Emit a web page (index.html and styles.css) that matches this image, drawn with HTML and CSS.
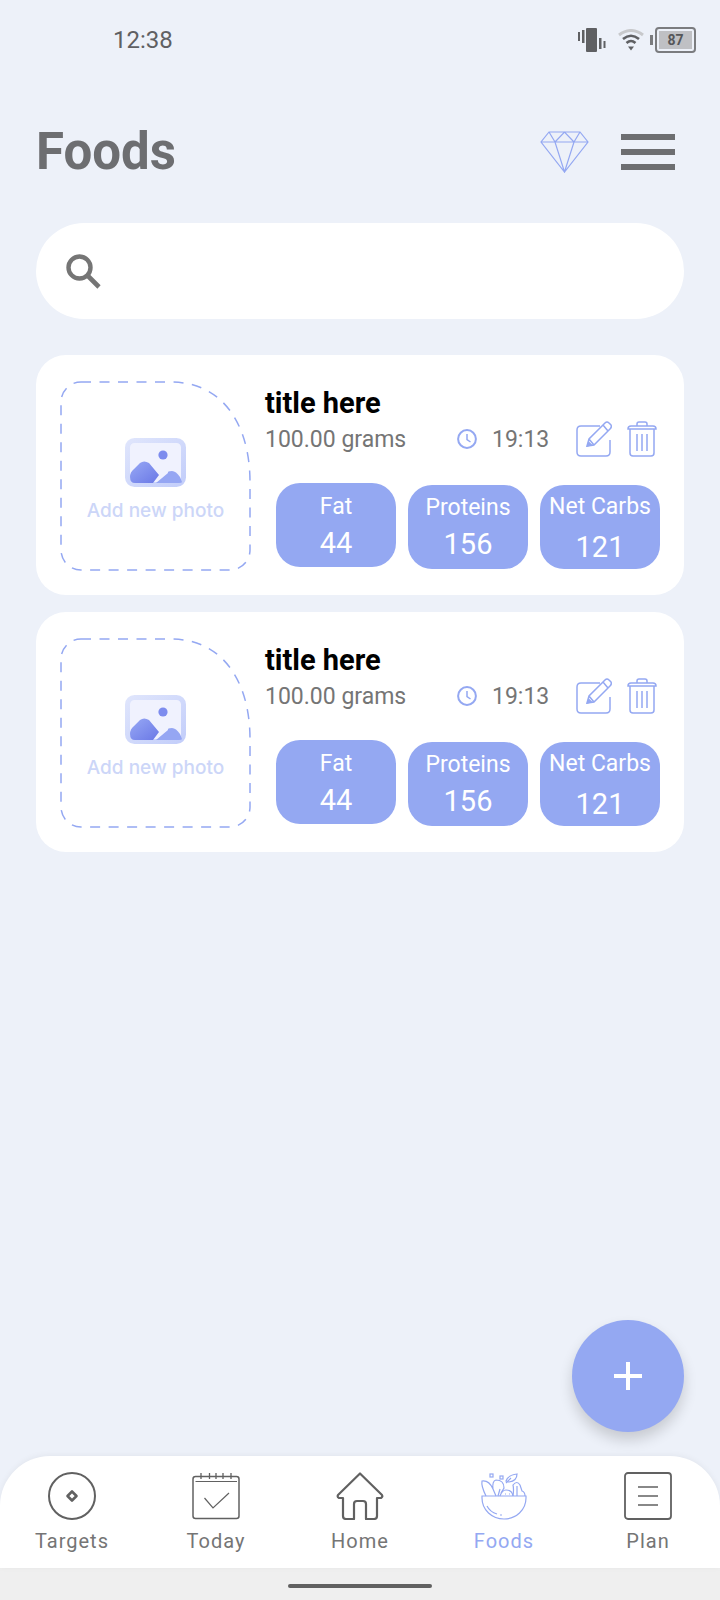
FILE: index.html
```html
<!DOCTYPE html>
<html lang="en">
<head>
  <meta charset="UTF-8">
  <title>Foods</title>
  <link rel="stylesheet" href="styles.css">
</head>
<body>

  <!-- shared icons for the food cards -->
  <svg class="sprite" aria-hidden="true">
    <defs>
      <linearGradient id="mountainBack" x1="0" y1="0" x2="1" y2="1">
        <stop offset="0" stop-color="#98a9f5"/>
        <stop offset="1" stop-color="#6a78e6"/>
      </linearGradient>
      <linearGradient id="frameEdge" x1="0" y1="0" x2="1" y2="1">
        <stop offset="0" stop-color="#dfe5fc"/>
        <stop offset="1" stop-color="#c3cefa"/>
      </linearGradient>
    </defs>
    <symbol id="photoBox" viewBox="0 0 191 190">
      <path d="M21 1 H111 C163 1 190 44 190 101 V169 A20 20 0 0 1 170 189 H21 A20 20 0 0 1 1 169 V21 A20 20 0 0 1 21 1 Z" fill="none" stroke="#94a8f2" stroke-width="1.5" stroke-dasharray="10 8.5"/>
    </symbol>
    <symbol id="photoIcon" viewBox="0 0 61 49">
      <rect x="2.5" y="2.5" width="56" height="44" rx="7" fill="#f0f2fe" stroke="url(#frameEdge)" stroke-width="5"/>
      <circle cx="38" cy="17" r="4.6" fill="#7d8cee"/>
      <path d="M31 45 L43 35 Q42 33 47 33 Q51 33 55 39 L57 44 Q57 45 54 45 Z" fill="#95a6f3"/>
      <path d="M5 39 Q5 34 9 31 L15 25 Q19 22 24 25 L34 37 L28 45 H10 Q5 45 5 39 Z" fill="url(#mountainBack)"/>
    </symbol>
    <symbol id="clockIcon" viewBox="0 0 20 20">
      <circle cx="10" cy="10" r="8.9" fill="none" stroke="#94a8f2" stroke-width="2"/>
      <path d="M10 5 V10.5 L13.5 13" fill="none" stroke="#94a8f2" stroke-width="1.5"/>
    </symbol>
    <symbol id="editIcon" viewBox="0 0 36 36">
      <path d="M24 5 H5 Q1 5 1 9 V31 Q1 35 5 35 H30 Q34 35 34 31 V19" fill="none" stroke="#94a8f2" stroke-width="1.5"/>
      <path d="M11 25 L13 18 L29 2 Q31 0 33 2 L35 4 Q36 6 34 8 L18 24 Z M13 18 L18 24 M27 4 L32 10" fill="none" stroke="#94a8f2" stroke-width="1.5"/>
      <path d="M10.5 26 L12.5 20 L16.5 24 Z" fill="#94a8f2"/>
    </symbol>
    <symbol id="trashIcon" viewBox="0 0 30 36">
      <path d="M1 8 Q1 5 4 5 H26 Q29 5 29 8 H1 Z M10 5 V3 Q10 1 12 1 H18 Q20 1 20 3 V5 M3 8 V32 Q3 35 6 35 H24 Q27 35 27 32 V8 M10 13 V30 M15 13 V30 M20 13 V30" fill="none" stroke="#94a8f2" stroke-width="1.5"/>
    </symbol>
  </svg>

  <div class="page">
    <div class="status-bar">
      <span class="status-time">12:38</span>
      <div class="status-icons">
        <svg class="icon-vibrate" viewBox="0 0 28 24" aria-hidden="true">
          <rect x="8" y="0" width="11" height="24" rx="1" fill="#5f6063"/>
          <rect x="0" y="4" width="2" height="9" fill="#5f6063"/>
          <rect x="4" y="2" width="2.5" height="13" fill="#5f6063"/>
          <rect x="21" y="10" width="2.5" height="11" fill="#5f6063"/>
          <rect x="25.5" y="13" width="2" height="7" fill="#5f6063"/>
        </svg>
        <svg class="icon-wifi" viewBox="0 0 26 22" aria-hidden="true">
          <path d="M1 6 Q13 -3 25 6" fill="none" stroke="#c8c9cc" stroke-width="3"/>
          <path d="M5 10 Q13 3.5 21 10" fill="none" stroke="#5f6063" stroke-width="2.6"/>
          <path d="M8.5 14 Q13 10 17.5 14" fill="none" stroke="#5f6063" stroke-width="2.6"/>
          <path d="M10 17.5 H16 L13 21.5 Z" fill="#5f6063"/>
        </svg>
        <div class="battery">
          <span class="battery-cap"></span>
          <div class="battery-body"><span class="battery-level">87</span></div>
        </div>
      </div>
    </div>

    <header class="top-bar">
      <h1>Foods</h1>
      <div class="top-actions">
        <svg class="icon-diamond" viewBox="0 0 49 42" aria-hidden="true">
          <path d="M9 1 H40 L48 11 L24.5 41 L1 11 Z M1 11 H48 M9 1 L15 11 L24.5 41 L34 11 L40 1 M15 11 L24.5 1 L34 11" fill="none" stroke="#94a8f2" stroke-width="1.2"/>
        </svg>
        <div class="menu-icon"><span></span><span></span><span></span></div>
      </div>
    </header>

    <div class="search-box">
      <svg class="icon-search" viewBox="0 0 35 35" aria-hidden="true">
        <circle cx="13.5" cy="13.5" r="11" fill="none" stroke="#757575" stroke-width="4.4"/>
        <path d="M21 21 L33 33" stroke="#757575" stroke-width="4.6"/>
      </svg>
    </div>

    <main class="food-list">
      <article class="food-card">
        <div class="photo-slot">
          <svg class="photo-border" aria-hidden="true"><use href="#photoBox"/></svg>
          <svg class="photo-icon" aria-hidden="true"><use href="#photoIcon"/></svg>
          <span class="photo-text">Add new photo</span>
        </div>
        <div class="food-info">
          <h2>title here</h2>
          <div class="food-meta">
            <span class="food-amount">100.00 grams</span>
            <svg class="icon-clock" aria-hidden="true"><use href="#clockIcon"/></svg>
            <span class="food-time">19:13</span>
            <svg class="icon-edit" aria-hidden="true"><use href="#editIcon"/></svg>
            <svg class="icon-trash" aria-hidden="true"><use href="#trashIcon"/></svg>
          </div>
          <div class="macros">
            <div class="macro macro-fat"><span>Fat</span><strong>44</strong></div>
            <div class="macro macro-protein"><span>Proteins</span><strong>156</strong></div>
            <div class="macro macro-carbs"><span>Net Carbs</span><strong>121</strong></div>
          </div>
        </div>
      </article>

      <article class="food-card">
        <div class="photo-slot">
          <svg class="photo-border" aria-hidden="true"><use href="#photoBox"/></svg>
          <svg class="photo-icon" aria-hidden="true"><use href="#photoIcon"/></svg>
          <span class="photo-text">Add new photo</span>
        </div>
        <div class="food-info">
          <h2>title here</h2>
          <div class="food-meta">
            <span class="food-amount">100.00 grams</span>
            <svg class="icon-clock" aria-hidden="true"><use href="#clockIcon"/></svg>
            <span class="food-time">19:13</span>
            <svg class="icon-edit" aria-hidden="true"><use href="#editIcon"/></svg>
            <svg class="icon-trash" aria-hidden="true"><use href="#trashIcon"/></svg>
          </div>
          <div class="macros">
            <div class="macro macro-fat"><span>Fat</span><strong>44</strong></div>
            <div class="macro macro-protein"><span>Proteins</span><strong>156</strong></div>
            <div class="macro macro-carbs"><span>Net Carbs</span><strong>121</strong></div>
          </div>
        </div>
      </article>
    </main>

    <button class="fab" type="button" aria-label="Add food"></button>

    <nav class="bottom-nav">
      <a class="nav-item" href="#">
        <svg class="nav-icon" viewBox="0 0 48 48" aria-hidden="true">
          <circle cx="24" cy="24" r="23" fill="none" stroke="#616161" stroke-width="2"/>
          <path d="M24 19.5 L28.5 24 L24 28.5 L19.5 24 Z" fill="none" stroke="#616161" stroke-width="2.6" stroke-linejoin="round"/>
        </svg>
        <span>Targets</span>
      </a>
      <a class="nav-item" href="#">
        <svg class="nav-icon" viewBox="0 0 48 48" aria-hidden="true">
          <rect x="1" y="4.5" width="46" height="42" rx="2.5" fill="none" stroke="#616161" stroke-width="1.5"/>
          <path d="M3.5 9.5 H45" stroke="#616161" stroke-width="1"/>
          <path d="M9 1 V7 M17.500 1 V7 M24 1 V7 M31 1 V7 M39 1 V7" stroke="#616161" stroke-width="1.300"/>
          <path d="M12.500 26 L21 36 L37 21" fill="none" stroke="#616161" stroke-width="1.200"/>
        </svg>
        <span>Today</span>
      </a>
      <a class="nav-item" href="#">
        <svg class="nav-icon" viewBox="0 0 48 48" aria-hidden="true">
          <path d="M24 1.500 L46 23 Q47 25 45 26 H41 V44 Q41 47 38 47 H30 V32 Q30 29 27 29 H21 Q18 29 18 32 V47 H10 Q7 47 7 44 V26 H3 Q1 25 2 23 Z" fill="none" stroke="#616161" stroke-width="2.200" stroke-linejoin="round"/>
        </svg>
        <span>Home</span>
      </a>
      <a class="nav-item nav-item-active" href="#">
        <svg class="nav-icon" viewBox="0 0 48 48" fill="none" stroke="#94a8f2" stroke-width="1.200" aria-hidden="true">
          <path d="M2 24 H46 V26 C46 38 36 47 24 47 C12 47 2 38 2 26 Z"/>
          <path d="M7 34 Q10 40 17 42 M20 43 H22"/>
          <path d="M6 24 Q1 14 2 9 Q9 8 13 17 L16 24 M13 17 Q12 9 16 8 Q24 8 24 16 L21 21 M18 24 L20 17"/>
          <path d="M20 24 Q22 18 26 18 Q32 18 33 24 M25 22 H26 M29 22 H30"/>
          <path d="M33 24 Q34 17 33 13 Q37 8 40 13 L42 19 Q45 20 45 24 M37 14 L37 24"/>
          <rect x="10" y="2" width="3" height="3"/>
          <rect x="20" y="4" width="3" height="3"/>
          <path d="M26 9 Q28 3 37 2 Q37 9 29 10 Z M26 11 L31 6"/>
        </svg>
        <span>Foods</span>
      </a>
      <a class="nav-item" href="#">
        <svg class="nav-icon" viewBox="0 0 48 48" aria-hidden="true">
          <rect x="1" y="1" width="46" height="46" rx="3" fill="none" stroke="#616161" stroke-width="1.800"/>
          <path d="M14 15 H34 M14 24 H34 M14 33 H34" stroke="#616161" stroke-width="1.500"/>
        </svg>
        <span>Plan</span>
      </a>
    </nav>

    <div class="gesture-bar"><span></span></div>
  </div>

</body>
</html>
```
FILE: styles.css
```css
body {
  margin: 0;
  font-family: Roboto, "Liberation Sans", sans-serif;
  background: #edf1f9;
}
h1, h2 {
  margin: 0;
}
.sprite {
  position: absolute;
  width: 0;
  height: 0;
}
.page {
  position: relative;
  width: 720px;
  height: 1600px;
  display: flex;
  flex-direction: column;
  overflow: hidden;
}

/* status bar */
.status-bar {
  height: 80px;
  display: flex;
  align-items: center;
  justify-content: space-between;
  padding: 0 24px 0 113px;
  box-sizing: border-box;
}
.status-time {
  font-size: 24px;
  color: #5f6063;
}
.status-icons {
  display: flex;
  align-items: center;
}
.icon-vibrate {
  width: 28px;
  height: 24px;
  margin-right: 12px;
}
.icon-wifi {
  width: 26px;
  height: 22px;
  margin-right: 6px;
}
.battery {
  display: flex;
  align-items: center;
}
.battery-cap {
  width: 3px;
  height: 10px;
  background: #7b7c7f;
  margin-right: 2px;
}
.battery-body {
  width: 33px;
  height: 18px;
  border: 2px solid #7b7c7f;
  border-radius: 4px;
  padding: 2px;
  display: flex;
}
.battery-level {
  flex: 1;
  background: #bfc0c4;
  color: #55565a;
  font-size: 14px;
  font-weight: 700;
  line-height: 18px;
  text-align: center;
}

/* header */
.top-bar {
  height: 143px;
  display: flex;
  align-items: center;
  justify-content: space-between;
  padding: 0 45px 0 36px;
  box-sizing: border-box;
}
.top-bar h1 {
  font-size: 51px;
  font-weight: 700;
  color: #6d6e71;
}
.top-actions {
  display: flex;
  align-items: center;
  gap: 32px;
}
.icon-diamond {
  width: 49px;
  height: 42px;
}
.menu-icon {
  width: 54px;
  display: flex;
  flex-direction: column;
  gap: 9px;
}
.menu-icon span {
  height: 6px;
  background: #6d6e71;
}

/* search */
.search-box {
  height: 96px;
  margin: 0 36px;
  padding-left: 30px;
  background: white;
  border-radius: 48px;
  display: flex;
  align-items: center;
}
.icon-search {
  width: 35px;
  height: 35px;
}

/* food cards */
.food-list {
  flex: 1;
  padding: 36px 36px 0;
  display: flex;
  flex-direction: column;
  gap: 17px;
}
.food-card {
  height: 240px;
  background: white;
  border-radius: 30px;
  display: flex;
  padding: 26px 24px 0;
  box-sizing: border-box;
}
.photo-slot {
  position: relative;
  width: 191px;
  height: 190px;
  display: flex;
  flex-direction: column;
  align-items: center;
  padding-top: 57px;
  box-sizing: border-box;
}
.photo-border {
  position: absolute;
  top: 0;
  left: 0;
  width: 191px;
  height: 190px;
}
.photo-icon {
  width: 61px;
  height: 49px;
}
.photo-text {
  margin-top: 12px;
  font-family: Inter, sans-serif;
  font-size: 19px;
  font-weight: 500;
  color: #ccd6f8;
}
.food-info {
  flex: 1;
  padding-left: 14px;
  min-width: 0;
}
.food-info h2 {
  font-size: 29px;
  font-weight: 700;
  line-height: 34px;
  margin-top: 5px;
  color: black;
}
.food-meta {
  display: flex;
  align-items: center;
  height: 36px;
  margin-top: 1px;
  color: #757575;
  font-size: 23px;
}
.food-amount {
  width: 192px;
}
.icon-clock {
  width: 20px;
  height: 20px;
  margin-right: 15px;
}
.food-time {
  width: 84px;
}
.icon-edit {
  width: 36px;
  height: 36px;
  margin-right: 15px;
  flex: none;
}
.icon-trash {
  width: 30px;
  height: 36px;
  flex: none;
}
.macros {
  display: flex;
  align-items: flex-start;
  gap: 12px;
  margin: 26px 0 0 11px;
}
.macro {
  width: 120px;
  height: 84px;
  background: #94a8f2;
  border-radius: 24px;
  color: white;
  display: flex;
  flex-direction: column;
  align-items: center;
  box-sizing: border-box;
  padding-top: 10px;
}
.macro span {
  font-size: 23px;
  line-height: 28px;
  white-space: nowrap;
}
.macro strong {
  font-size: 29px;
  font-weight: 400;
  line-height: 36px;
  margin-top: 4px;
}
.macro-protein, .macro-carbs {
  margin-top: 2px;
}
.macro-protein {
  padding-top: 9px;
}
.macro-carbs {
  padding-top: 8px;
}
.macro-carbs strong {
  margin-top: 8px;
}

/* add button */
.fab {
  position: absolute;
  left: 572px;
  top: 1320px;
  width: 112px;
  height: 112px;
  border: none;
  border-radius: 50%;
  background: #94a8f2;
  box-shadow: 0 8px 14px rgba(0,0,0,0.16);
}
.fab::before, .fab::after {
  content: "";
  position: absolute;
  background: white;
}
.fab::before {
  left: 42px;
  top: 54px;
  width: 28px;
  height: 4px;
}
.fab::after {
  left: 54px;
  top: 42px;
  width: 4px;
  height: 28px;
}

/* bottom nav */
.bottom-nav {
  height: 112px;
  background: white;
  border-radius: 50px 50px 0 0;
  box-shadow: 0 -1px 6px rgba(0,0,0,0.05);
  display: flex;
  position: relative;
}
.nav-item {
  flex: 1;
  display: flex;
  flex-direction: column;
  align-items: center;
  padding-top: 16px;
  color: #757575;
  text-decoration: none;
  font-size: 20px;
  letter-spacing: 1px;
}
.nav-item span {
  margin-top: 9px;
  line-height: 24px;
}
.nav-item-active {
  color: #94a8f2;
}
.nav-icon {
  width: 48px;
  height: 48px;
}
.gesture-bar {
  height: 32px;
  background: #efefef;
  display: flex;
  justify-content: center;
  padding-top: 16px;
  box-sizing: border-box;
}
.gesture-bar span {
  width: 144px;
  height: 4px;
  background: #606060;
  border-radius: 2px;
}
```
